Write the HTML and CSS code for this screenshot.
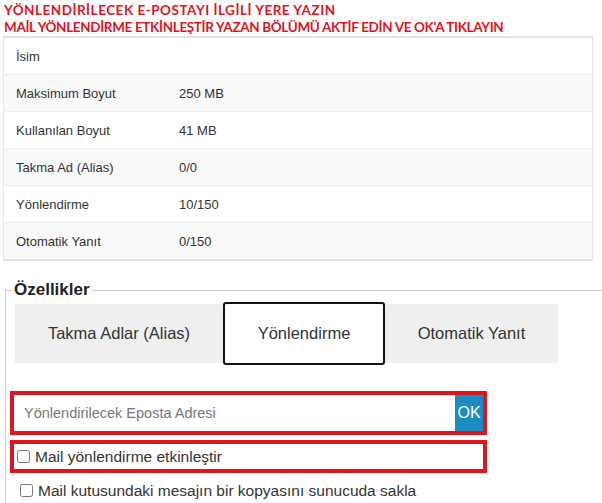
FILE: index.html
```html
<!DOCTYPE html>
<html lang="tr">
<head>
    <meta charset="UTF-8">
    <meta name="viewport" content="width=device-width, initial-scale=1.0">
    <title>Yönlendirme</title>
    <link rel="stylesheet" href="styles.css">
</head>
<body>
  <div class="note">
    <p class="note-first">YÖNLENDİRİLECEK E-POSTAYI İLGİLİ YERE YAZIN</p>
    <p class="note-second">MAİL YÖNLENDİRME ETKİNLEŞTİR YAZAN BÖLÜMÜ AKTİF EDİN VE OK'A TIKLAYIN</p>
  </div>

  <table class="info">
    <tr><td class="info-label">İsim</td><td></td></tr>
    <tr><td class="info-label">Maksimum Boyut</td><td>250 MB</td></tr>
    <tr><td class="info-label">Kullanılan Boyut</td><td>41 MB</td></tr>
    <tr><td class="info-label">Takma Ad (Alias)</td><td>0/0</td></tr>
    <tr><td class="info-label">Yönlendirme</td><td>10/150</td></tr>
    <tr><td class="info-label">Otomatik Yanıt</td><td>0/150</td></tr>
  </table>

  <fieldset class="features">
    <legend>Özellikler</legend>
    <div class="tabs">
      <div class="tab tab-alias">Takma Adlar (Alias)</div>
      <div class="tab tab-fwd active">Yönlendirme</div>
      <div class="tab tab-auto">Otomatik Yanıt</div>
    </div>

    <div class="mark">
      <div class="fwd-row">
        <input class="fwd-input" placeholder="Yönlendirilecek Eposta Adresi">
        <button class="ok">OK</button>
      </div>
    </div>
    <div class="mark mark-check">
      <label class="check"><input type="checkbox"> Mail yönlendirme etkinleştir</label>
    </div>
    <label class="check check-last"><input type="checkbox"> Mail kutusundaki mesajın bir kopyasını sunucuda sakla</label>
  </fieldset>
</body>
</html>
```

FILE: styles.css
```css
body{
  margin: 0;
  font-family: "Liberation Sans", Arial, sans-serif;
  color: #333;
  background: #fff;
}

.note{
  padding: 2px 0 0 4px;
  height: 34px;
  color: #e0141e;
  font-family: Lato, sans-serif;
  font-weight: bold;
  font-size: 13.5px;
}

.note p{
  margin: 0;
  line-height: 17px;
}

.note-first{
  letter-spacing: 0.5px;
}

.note-second{
  letter-spacing: -0.35px;
}

.info{
  margin-left: 3px;
  width: 590px;
  border-collapse: collapse;
  border-top: 2px solid #e3e3e3;
  border-bottom: 2px solid #e3e3e3;
  border-left: 1px solid #e8e8e8;
  border-right: 1px solid #e8e8e8;
  font-size: 13px;
}

.info td{
  height: 36px;
  padding: 0 0 0 12px;
  border-top: 1px solid #eee;
}

.info tr:first-child td{
  border-top: none;
  height: 36px;
}

.info tr:nth-child(even) td{
  background: #f9f9f9;
}

.info-label{
  width: 151px;
}

.features{
  margin: 19px 0 0 5px;
  padding: 0 0 0 9px;
  border: none;
  border-top: 1px solid #ccc;
  border-left: 1px solid #ccc;
}

.features legend{
  font-weight: bold;
  font-size: 17px;
  color: #222;
  padding: 0 2px;
  margin-left: -3px;
}

.tabs{
  display: flex;
  width: 543px;
  height: 59px;
  margin-top: 4px;
  background: #efefef;
}

.tab{
  display: flex;
  align-items: center;
  justify-content: center;
  font-size: 16.5px;
  color: #333;
}

.tab-alias{
  width: 208px;
}

.tab-fwd{
  width: 162px;
}

.tab-auto{
  width: 173px;
}

.tab.active{
  background: #fff;
  border: 2px solid #111;
  border-radius: 3px;
  margin: -2px 0;
  box-sizing: border-box;
  height: 63px;
}

.mark{
  width: 469px;
  border: 4px solid #e0141e;
  margin: 28px 0 0 -5px;
}

.mark-check{
  margin-top: 5px;
  height: 25px;
}

.fwd-row{
  display: flex;
  height: 36px;
}

.fwd-input{
  flex: 1;
  border: none;
  padding: 0 10px;
  font-family: "Liberation Sans", Arial, sans-serif;
  font-size: 14.5px;
  outline: none;
}

.fwd-input::placeholder{
  color: #777;
}

.ok{
  width: 28px;
  border: none;
  padding: 0;
  background: #1b8dc2;
  color: #fff;
  font-family: "Liberation Sans", Arial, sans-serif;
  font-size: 16px;
}

.check{
  display: flex;
  align-items: center;
  gap: 5px;
  font-size: 15.5px;
  color: #333;
  height: 25px;
}

.check input{
  margin: 0 0 0 3px;
  width: 13px;
  height: 13px;
}

.check-last{
  margin-top: 5px;
  margin-left: 2px;
}
```
